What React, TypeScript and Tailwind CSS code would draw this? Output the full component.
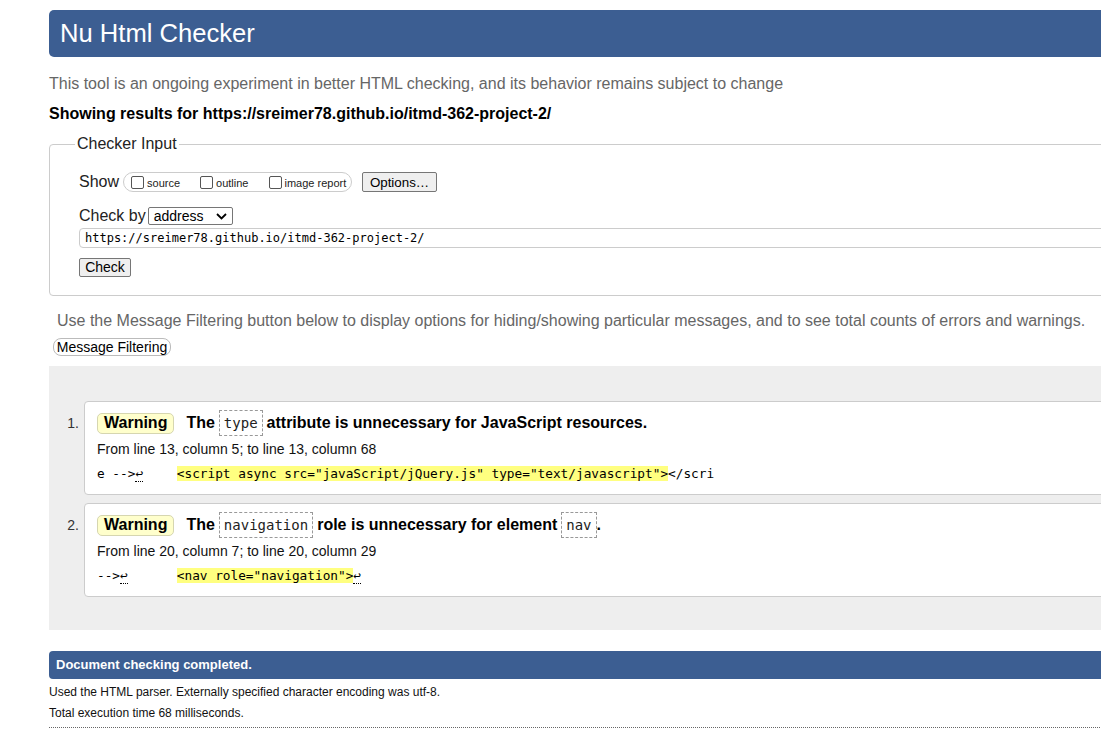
import React from "react";

const sans = { fontFamily: '"Liberation Sans", Arial, sans-serif' };

function Code({ children }: { children: React.ReactNode }) {
  return (
    <span className="inline-flex h-[26px] items-center border border-dashed border-[#999] bg-white px-[4px] font-['DejaVu_Sans_Mono',monospace] text-[14px] font-normal text-[#222]">
      {children}
    </span>
  );
}

function Badge() {
  return (
    <span className="inline-flex h-[21px] items-center rounded-[5px] border border-[#d6d6b0] bg-[#ffffcc] px-[6px] text-[16px] font-bold text-black">
      Warning
    </span>
  );
}

function Ret() {
  return <span className="border-b border-dotted border-black">↩</span>;
}

function Item({
  n,
  title,
  loc,
  code,
}: {
  n: string;
  title: React.ReactNode;
  loc: string;
  code: React.ReactNode;
}) {
  return (
    <div className="flex">
      <div className="mt-[9px] h-[26px] w-[35px] pr-[5px] text-right text-[14px] leading-[26px] text-[#333]">
        {n}
      </div>
      <div className="h-[94px] flex-1 rounded-l-[4px] border border-[#ccc] bg-white pl-[12px] pt-[8px]">
        <div className="flex h-[26px] items-center text-[16px] font-bold text-black">
          <Badge />
          {title}
        </div>
        <div className="mt-[4px] h-[18px] text-[14px] leading-[18px] text-[#111]">{loc}</div>
        <div className="mt-[6px] h-[20px] whitespace-pre font-['DejaVu_Sans_Mono',monospace] text-[12.75px] leading-[20px] text-black">
          {code}
        </div>
      </div>
    </div>
  );
}

export default function App() {
  return (
    <div className="h-[735px] w-[1101px] overflow-hidden bg-white text-black" style={sans}>
      <div className="w-[1300px] pl-[49px] pt-[10px]">
        <div className="flex h-[47px] items-center rounded-[5px] bg-[#3c5e92] pl-[11px] text-[25.6px] text-white">
          Nu Html Checker
        </div>
        <p className="mt-[17px] h-[20px] text-[16px] leading-[20px] text-[#666]">
          This tool is an ongoing experiment in better HTML checking, and its behavior remains subject to change
        </p>
        <p className="mt-[10px] h-[20px] text-[16px] font-bold leading-[20px] text-black">
          Showing results for https://sreimer78.github.io/itmd-362-project-2/
        </p>
        <fieldset className="mt-[11px] rounded-[4px] border border-[#ccc] pb-[18px] pl-[29px] pt-[19px]">
          <legend className="ml-[-4px] px-[2px] text-[16px] leading-[18px] text-[#222]">Checker Input</legend>
          <div className="flex h-[20px] items-center">
            <span className="text-[16px] text-[#222]">Show</span>
            <div className="ml-[4px] flex h-[20px] w-[229px] items-center rounded-[10px] border border-[#ccc] pl-[7px]">
              <span className="h-[13px] w-[13px] rounded-[2px] border border-[#555] bg-white" />
              <span className="ml-[3px] mt-[2px] text-[11px] text-[#222]">source</span>
              <span className="ml-[20px] h-[13px] w-[13px] rounded-[2px] border border-[#555] bg-white" />
              <span className="ml-[3px] mt-[2px] text-[11px] text-[#222]">outline</span>
              <span className="ml-[21px] h-[13px] w-[13px] rounded-[2px] border border-[#555] bg-white" />
              <span className="ml-[2px] mt-[2px] text-[11px] text-[#222]">image report</span>
            </div>
            <button className="ml-[10px] h-[20px] w-[75px] rounded-[2px] border border-[#767676] bg-[#efefef] text-[13.33px] text-black">
              Options…
            </button>
          </div>
          <div className="mt-[14px] flex h-[20px] items-center">
            <span className="text-[16px] text-[#222]">Check by</span>
            <div className="ml-[2px] flex h-[18px] w-[85px] items-center justify-between rounded-[2px] border border-[#767676] bg-white pl-[5px] pr-[5px] text-[14px] text-black">
              <span>address</span>
              <svg width="11" height="7" viewBox="0 0 11 7" fill="none">
                <path d="M1 1l4.5 4.5L10 1" stroke="#000" strokeWidth="1.8" />
              </svg>
            </div>
          </div>
          <div className="mt-[2px] flex h-[20px] items-center rounded-l-[4px] border border-[#ccc] pl-[5px] font-['DejaVu_Sans_Mono',monospace] text-[12px] text-black">
            https://sreimer78.github.io/itmd-362-project-2/
          </div>
          <button className="mt-[10px] block h-[19px] w-[52px] rounded-[2px] border border-[#767676] bg-[#efefef] text-[14px] leading-[17px] text-black">
            Check
          </button>
        </fieldset>
        <p className="mt-[15px] h-[20px] pl-[8px] text-[16px] leading-[20px] text-[#666]">
          Use the Message Filtering button below to display options for hiding/showing particular messages, and to see total counts of errors and warnings.
        </p>
        <button className="ml-[4px] mt-[7px] block h-[18px] w-[118px] rounded-[8px] border border-[#bbb] bg-white text-[14px] leading-[16px] text-black">
          Message Filtering
        </button>
        <div className="mt-[10px] flex h-[264px] flex-col gap-[8px] bg-[#eeeeee] pt-[35px]">
          <Item
            n="1."
            title={
              <>
                <span className="ml-[12px]">The</span>
                <span className="ml-[4px]">
                  <Code>type</Code>
                </span>
                <span className="ml-[4px]">attribute is unnecessary for JavaScript resources.</span>
              </>
            }
            loc="From line 13, column 5; to line 13, column 68"
            code={
              <>
                {"e -->"}
                <Ret />
                {"    "}
                <span className="ml-[3px] bg-[#ffff80]">{'<script async src="javaScript/jQuery.js" type="text/javascript">'}</span>
                {"</scri"}
              </>
            }
          />
          <Item
            n="2."
            title={
              <>
                <span className="ml-[12px]">The</span>
                <span className="ml-[4px]">
                  <Code>navigation</Code>
                </span>
                <span className="ml-[4px]">role is unnecessary for element</span>
                <span className="ml-[4px]">
                  <Code>nav</Code>
                </span>
                <span>.</span>
              </>
            }
            loc="From line 20, column 7; to line 20, column 29"
            code={
              <>
                {"-->"}
                <Ret />
                {"      "}
                <span className="ml-[3px] bg-[#ffff80]">{'<nav role="navigation">'}</span>
                <Ret />
              </>
            }
          />
        </div>
        <div className="mt-[21px] flex h-[28px] items-center rounded-l-[4px] bg-[#3c5e92] pl-[7px] text-[13px] font-bold text-white">
          Document checking completed.
        </div>
        <p className="mt-[3px] text-[12px] leading-[21px] text-[#111]">
          Used the HTML parser. Externally specified character encoding was utf-8.
        </p>
        <p className="text-[12px] leading-[21px] text-[#111]">Total execution time 68 milliseconds.</p>
        <div className="mt-[3px] border-t border-dotted border-[#666]" />
      </div>
    </div>
  );
}
